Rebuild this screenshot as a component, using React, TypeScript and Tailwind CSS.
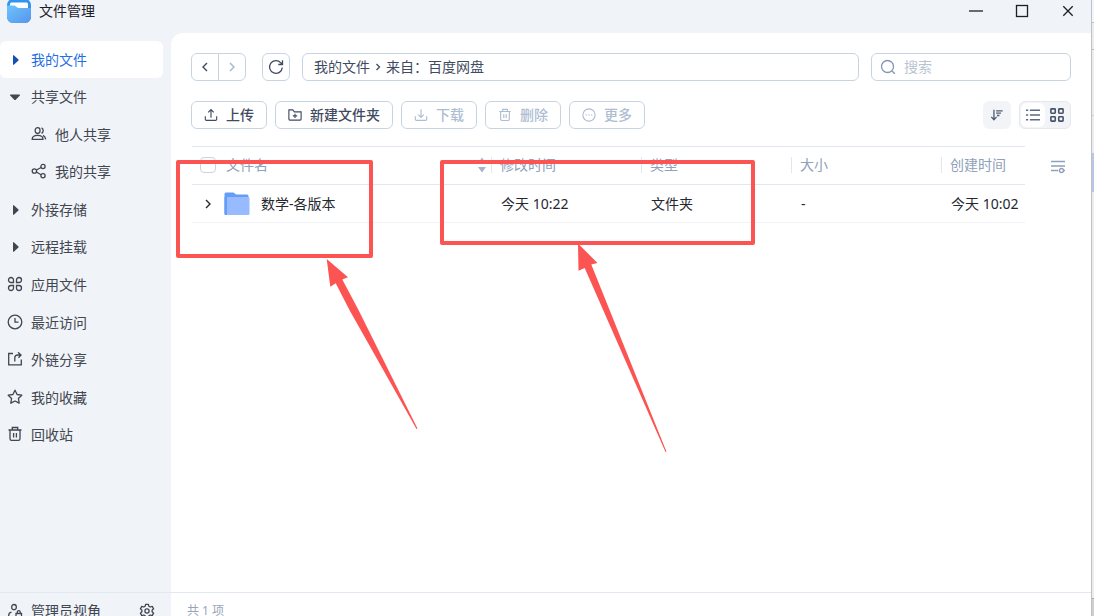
import React from "react";

type IconProps = { size?: string; className?: string };

function Svg({ size = "size-4", className = "", children }: IconProps & { children: React.ReactNode }) {
  return (
    <svg
      viewBox="0 0 16 16"
      fill="none"
      stroke="currentColor"
      strokeWidth="1.3"
      className={`shrink-0 ${size} ${className}`}
      aria-hidden="true"
    >
      {children}
    </svg>
  );
}

const CaretRight = ({ className }: IconProps) => (
  <Svg className={className}>
    <path d="M6 4.200v9.600h.8l4.700-4.300v-1L6.800 4.200z" fill="currentColor" stroke="none" />
  </Svg>
);
const CaretDown = () => (
  <Svg>
    <path d="M3.200 6.600h9.600v.8L8.500 12h-1L3.200 7.400z" fill="currentColor" stroke="none" />
  </Svg>
);
const People = () => (
  <Svg>
    <rect x="4.200" y="1.700" width="4.800" height="5.800" rx="2.400" />
    <path d="M1.200 13.300c0-2.600 2-3.900 5.400-3.900s5.400 1.300 5.400 3.900z" />
    <path d="M10.500 1.800c1.300.4 1.700 1.500 1.700 2.800s-.5 2.200-1.700 2.700M12 9.400c1.400.7 2.400 2 2.700 3.900" />
  </Svg>
);
const ShareNodes = () => (
  <Svg>
    <circle cx="3.400" cy="8" r="2.200" />
    <circle cx="12" cy="3.500" r="2.100" />
    <circle cx="12" cy="12.700" r="2.100" />
    <path d="M5.400 7l4.700-2.500M5.400 9l4.700 2.700" />
  </Svg>
);
const Apps = () => (
  <Svg>
    <path d="M6.500 6.500H4A2.500 2.500 0 1 1 6.500 4zM9.500 6.500V4A2.500 2.500 0 1 1 12 6.500zM6.500 9.500V12A2.500 2.500 0 1 1 4 9.500zM9.500 9.500H12A2.500 2.500 0 1 1 9.500 12z" />
  </Svg>
);
const Clock = () => (
  <Svg>
    <circle cx="8" cy="8" r="6.800" />
    <path d="M8 4v4.200h3.500" />
  </Svg>
);
const External = () => (
  <Svg>
    <path d="M6 2.500H1.700v11.300h12.600V8.500M7.800 10.500V7c0-2 1.200-3 3-3h3M11 1.200L14 4l-2.500 2.700" />
  </Svg>
);
const Star = () => (
  <Svg>
    <path d="M8 1.200l2.100 4.300 4.700.7-3.400 3.300.8 4.700L8 12l-4.200 2.200.8-4.700L1.200 6.200l4.700-.7z" strokeLinejoin="round" />
  </Svg>
);
const Trash = ({ size }: IconProps) => (
  <Svg size={size}>
    <path d="M1.500 4h13M5.300 4V1.500h5.400V4M3 4v8.700c0 1 .6 1.600 1.600 1.600h6.800c1 0 1.600-.6 1.600-1.600V4M6.600 7v4.500M9.400 7v4.500" />
  </Svg>
);
const AdminUser = () => (
  <Svg>
    <rect x="4.700" y="1.500" width="4.600" height="5.200" rx="2.300" />
    <path d="M7 14H1.700v-1.500c0-1.700 1-3 2.800-3.300M9 10.500h5.500V14H9zM10.300 10.500V9.200c0-2 2.900-2 2.900 0v1.300" />
  </Svg>
);
const Gear = () => (
  <Svg>
    <path
      d="M6.600 1.300h2.800l.5 2 1.300.7 2-.6 1.400 2.400-1.500 1.400v1.600l1.500 1.400-1.400 2.400-2-.6-1.300.7-.5 2H6.600l-.5-2-1.300-.7-2 .6-1.400-2.400 1.500-1.400V7.200L1.400 5.800l1.400-2.400 2 .6 1.300-.7z"
      strokeLinejoin="round"
    />
    <circle cx="8" cy="8" r="2.100" />
  </Svg>
);
const Upload = ({ size }: IconProps) => (
  <Svg size={size}>
    <path d="M8 11V2M4.800 5L8 1.800 11.200 5M1.500 9.500v3.300c0 .9.500 1.400 1.400 1.400h10.200c.9 0 1.400-.5 1.400-1.400V9.500" />
  </Svg>
);
const Download = ({ size }: IconProps) => (
  <Svg size={size}>
    <path d="M8 1.500v9M4.800 7.500L8 10.700l3.200-3.200M1.500 9.500v3.300c0 .9.500 1.400 1.400 1.400h10.200c.9 0 1.400-.5 1.400-1.400V9.500" />
  </Svg>
);
const NewFolder = ({ size }: IconProps) => (
  <Svg size={size}>
    <path d="M1 2.200h4.500l1.800 2.200H15v8.300c0 .7-.4 1.100-1.100 1.100H2.100c-.7 0-1.100-.4-1.100-1.100zM8 6.500v5M5.500 9h5" />
  </Svg>
);
const More = ({ size }: IconProps) => (
  <Svg size={size}>
    <circle cx="8" cy="8" r="7" />
    <path d="M4.200 8h1.500M7.250 8h1.500M10.300 8h1.500" />
  </Svg>
);
const Chevron = ({ className }: IconProps) => (
  <Svg className={className}>
    <path d="M6 4l4 4-4 4" strokeWidth="1.400" />
  </Svg>
);
const CrumbChevron = () => (
  <Svg>
    <path d="M6.500 5l3 3-3 3" strokeWidth="1.300" />
  </Svg>
);
const Refresh = () => (
  <Svg>
    <path d="M14.300 8.500A6.400 6.400 0 1 1 12.800 3.800L14.300 5.300M14.500 1.300v4.200h-4.200" strokeWidth="1.300" />
  </Svg>
);
const Search = () => (
  <Svg className="text-[#8496b5]">
    <circle cx="7.500" cy="7.500" r="6" />
    <path d="M12 12l2.800 2.800" />
  </Svg>
);
const SortDesc = () => (
  <Svg size="size-3.5">
    <path d="M4.500 2v11M1.500 10.200l3 3.200 3-3.200" strokeWidth="1.500" />
    <path d="M7 3.200h7.500M7 5.900h5.500M8 8.600h2.800" strokeWidth="1.500" />
  </Svg>
);
const ListView = () => (
  <Svg size="size-3.5">
    <path d="M0 2.500h2.500M0 8h2.500M0 13.500h2.500M4.500 2.500H16M4.500 8H16M4.500 13.500H16" strokeWidth="1.700" />
  </Svg>
);
const GridView = () => (
  <Svg size="size-3.5">
    <g strokeWidth="1.800">
      <rect x="1" y="1" width="5" height="5" rx=".8" />
      <rect x="10" y="1" width="5" height="5" rx=".8" />
      <rect x="1" y="10" width="5" height="5" rx=".8" />
      <rect x="10" y="10" width="5" height="5" rx=".8" />
    </g>
  </Svg>
);
const Columns = () => (
  <Svg>
    <path d="M1 3.500h14M1 8h14M1 12.500h7" strokeWidth="1.400" />
    <circle cx="11.500" cy="12.500" r="2" />
    <path d="M14 12.500h1M8.700 12.500h.8" />
  </Svg>
);

function AppLogo() {
  return (
    <svg viewBox="0 0 24 24" className="-mt-px size-6 shrink-0" aria-hidden="true">
      <defs>
        <linearGradient id="logo-front" x1="0" y1="0" x2="1" y2="1">
          <stop offset="0" stopColor="#6cc4fb" />
          <stop offset="1" stopColor="#5794ee" />
        </linearGradient>
      </defs>
      <rect width="24" height="24" rx="6" fill="#2f95ee" />
      <rect x="3" y="3.500" width="18" height="8" rx="1.500" fill="#fff" />
      <path d="M0 6.500h7.500c1.500 0 2 2.500 4 2.500H24v9a6 6 0 0 1-6 6H6a6 6 0 0 1-6-6z" fill="url(#logo-front)" />
    </svg>
  );
}

function FolderIcon() {
  return (
    <svg viewBox="0 0 26 24" className="h-6 w-[26px] shrink-0" aria-hidden="true">
      <path d="M.5 2A1.500 1.500 0 0 1 2 .5h7.500l2.500 2h11A1.500 1.500 0 0 1 24.500 4v17H3l-1 2A1.500 1.500 0 0 1 .5 21.500z" fill="#649df8" />
      <rect x="2.500" y="5" width="23" height="18" rx="1.500" fill="#98bbff" />
      <path d="M.5 5v16.500A1.500 1.500 0 0 0 2 23h1V5z" fill="#649df8" />
    </svg>
  );
}

type NavItem = { label: string; icon: React.ReactNode; active?: boolean; nested?: boolean };

const navItems: NavItem[] = [
  { label: "我的文件", icon: <CaretRight className="text-[#1350b4]" />, active: true },
  { label: "共享文件", icon: <CaretDown /> },
  { label: "他人共享", icon: <People />, nested: true },
  { label: "我的共享", icon: <ShareNodes />, nested: true },
  { label: "外接存储", icon: <CaretRight /> },
  { label: "远程挂载", icon: <CaretRight /> },
  { label: "应用文件", icon: <Apps /> },
  { label: "最近访问", icon: <Clock /> },
  { label: "外链分享", icon: <External /> },
  { label: "我的收藏", icon: <Star /> },
  { label: "回收站", icon: <Trash /> },
];

function Sidebar() {
  return (
    <aside className="flex w-[171px] shrink-0 flex-col text-[#41464f]">
      <nav className="mt-2 mr-2 flex h-[413px] flex-col justify-between">
        {navItems.map((item) => (
          <a
            key={item.label}
            href="#"
            className={`flex h-[37px] items-center gap-2 rounded-md [&>svg]:-mt-0.5 ${item.nested ? "pl-[31px]" : "pl-[7px]"} ${
              item.active ? "bg-white text-[#1f6fe5]" : ""
            }`}
          >
            {item.icon}
            <span>{item.label}</span>
          </a>
        ))}
      </nav>
      <div className="mt-auto flex h-6 items-start gap-2 border-t border-[#e1e8f0] pt-2 pl-[7px]">
        <button type="button" className="flex flex-1 items-start gap-2 leading-5">
          <span className="pt-0.5">
            <AdminUser />
          </span>
          管理员视角
        </button>
        <button type="button" aria-label="设置" className="mr-4 pt-0.5">
          <Gear />
        </button>
      </div>
    </aside>
  );
}

function ToolButton({ icon, label, disabled }: { icon: React.ReactNode; label: string; disabled?: boolean }) {
  return (
    <button
      type="button"
      disabled={disabled}
      className="flex h-7 items-center gap-2 rounded-md border border-[#c9d4e2] px-3 font-medium text-[#3f4b60] disabled:text-[#aebdd1]"
    >
      {icon}
      {label}
    </button>
  );
}

function HeadCell({ label }: { label: string }) {
  return (
    <th className="p-0 pb-0.5 text-left font-normal">
      <div className="flex h-4 items-center border-l border-[#e0e7ef] pl-2">{label}</div>
    </th>
  );
}

function FileTable() {
  return (
    <table className="min-w-0 flex-1 table-fixed border-collapse whitespace-nowrap">
      <colgroup>
        <col />
        <col className="w-[150px]" />
        <col className="w-[150px]" />
        <col className="w-[150px]" />
        <col className="w-[84px]" />
      </colgroup>
      <thead>
        <tr className="h-[38px] border-y border-[#e0e7ef] text-[#8fa0ba]">
          <th className="p-0 pb-0.5 text-left font-normal">
            <div className="flex items-center pl-2">
              <input
                type="checkbox"
                aria-label="全选"
                className="mr-[10px] size-4 appearance-none rounded border border-[#c9d4e2]"
              />
              <span className="flex-1">文件名</span>
              <svg viewBox="0 0 10 16" className="mr-1 h-4 w-[10px]" fill="#a5b5cc" aria-hidden="true">
                <path d="M5 .5L9 6H1zM1 10h8l-4 5.500z" />
              </svg>
            </div>
          </th>
          <HeadCell label="修改时间" />
          <HeadCell label="类型" />
          <HeadCell label="大小" />
          <HeadCell label="创建时间" />
        </tr>
      </thead>
      <tbody>
        <tr className="h-[38px] border-b border-[#f1f3f6] text-[#24282f]">
          <td className="p-0">
            <div className="flex items-center pl-2">
              <button type="button" aria-label="展开" className="mr-2">
                <Chevron />
              </button>
              <FolderIcon />
              <span className="ml-[11px]">数学-各版本</span>
            </div>
          </td>
          <td className="p-0 pl-[10px]">今天 10:22</td>
          <td className="p-0 pl-[10px]">文件夹</td>
          <td className="p-0 pl-[10px]">-</td>
          <td className="p-0 pl-[10px]">今天 10:02</td>
        </tr>
      </tbody>
    </table>
  );
}

function Main() {
  return (
    <main className="flex min-w-0 flex-1 flex-col rounded-tl-xl bg-white">
      <div className="flex items-center px-5 pt-5 text-[#3f4b60]">
        <div className="flex h-7 overflow-hidden rounded-md border border-[#c9d4e2]">
          <button type="button" aria-label="后退" className="flex w-[27px] items-center justify-center border-r border-[#c9d4e2]">
            <Chevron className="rotate-180" />
          </button>
          <button type="button" aria-label="前进" className="flex w-[26px] items-center justify-center text-[#a5b5cc]">
            <Chevron />
          </button>
        </div>
        <button
          type="button"
          aria-label="刷新"
          className="ml-4 flex size-7 items-center justify-center rounded-md border border-[#c9d4e2]"
        >
          <Refresh />
        </button>
        <div className="ml-3 flex h-7 min-w-0 flex-1 items-center rounded-md border border-[#c9d4e2] px-[11px]">
          <a href="#">我的文件</a>
          <CrumbChevron />
          <a href="#">来自：百度网盘</a>
        </div>
        <label className="ml-3 flex h-7 w-[200px] items-center gap-2 rounded-md border border-[#c9d4e2] px-2">
          <Search />
          <input
            type="text"
            aria-label="搜索"
            placeholder="搜索"
            className="min-w-0 flex-1 bg-transparent outline-none placeholder:text-[#b9c4d2]"
          />
        </label>
      </div>

      <div className="mt-5 flex items-center gap-2 px-5">
        <ToolButton icon={<Upload size="size-3.5" />} label="上传" />
        <ToolButton icon={<NewFolder size="size-3.5" />} label="新建文件夹" />
        <ToolButton icon={<Download size="size-3.5" />} label="下载" disabled />
        <ToolButton icon={<Trash size="size-3.5" />} label="删除" disabled />
        <ToolButton icon={<More size="size-3.5" />} label="更多" disabled />
        <button
          type="button"
          aria-label="排序"
          className="ml-auto flex size-7 items-center justify-center rounded-md bg-[#f2f4f7] text-[#4f5d74]"
        >
          <SortDesc />
        </button>
        <div className="flex h-7 items-center rounded-md border border-[#e5e8ee] bg-[#f2f4f7] px-px text-[#5b6a82]">
          <button type="button" aria-label="列表" className="flex h-6 w-6 items-center justify-center rounded-md bg-white">
            <ListView />
          </button>
          <button type="button" aria-label="网格" className="flex h-6 w-6 items-center justify-center text-[#45536a]">
            <GridView />
          </button>
        </div>
      </div>

      <div className="mt-[17px] flex items-start pr-5 pl-[21px]">
        <FileTable />
        <button type="button" aria-label="列设置" className="flex h-[39px] w-[46px] items-center justify-end pr-[5px] text-[#8fa0ba]">
          <Columns />
        </button>
      </div>

      <footer className="mt-auto h-6 border-t border-[#e1e8f0] px-4 pt-2 text-xs leading-5 text-[#98a5b9]">共 1 项</footer>
    </main>
  );
}

function Annotations() {
  return (
    <div className="pointer-events-none absolute inset-0 z-10" aria-hidden="true">
      <div className="absolute top-[160px] left-[176px] h-[98px] w-[197px] rounded-xs border-4 border-[#fc5453]" />
      <div className="absolute top-[160px] left-[440px] h-[85px] w-[315px] rounded-xs border-4 border-[#fc5453]" />
      <svg className="absolute top-0 left-0 h-[616px] w-[1094px]" viewBox="0 0 1094 616" fill="#fc5453">
        <path d="M326.700 259L348 277.200L342.300 279.600L358 309L417.500 428.500L416.500 429L350 311L335.700 283.300L330.300 286.700z" />
        <path d="M578 243.500L597.500 263L591.300 264.500L666.500 451.700L665.500 452L584.700 268L578.500 270.800z" />
      </svg>
    </div>
  );
}

export default function App() {
  return (
    <div className="relative flex h-screen overflow-hidden bg-[#f0f3f8] font-['Noto_Sans','Noto_Sans_CJK_SC',sans-serif] text-sm leading-5">
      <div className="flex min-w-0 flex-1 flex-col">
        <header className="flex h-[33px] shrink-0 items-start pl-[7px] text-[#1c2026]">
          <AppLogo />
          <h1 className="ml-2 leading-[22px]">文件管理</h1>
          <div className="ml-auto flex">
            <button type="button" aria-label="最小化" className="flex h-[22px] w-[46px] items-center justify-center">
              <Svg>
                <path d="M1 8h14" />
              </Svg>
            </button>
            <button type="button" aria-label="最大化" className="flex h-[22px] w-[46px] items-center justify-center">
              <Svg>
                <rect x="2.500" y="2.500" width="11" height="11" />
              </Svg>
            </button>
            <button type="button" aria-label="关闭" className="flex h-[22px] w-[46px] items-center justify-center">
              <Svg>
                <path d="M3.300 3.300l9.400 9.400M12.700 3.300l-9.400 9.400" />
              </Svg>
            </button>
          </div>
        </header>
        <div className="flex min-h-0 flex-1">
          <Sidebar />
          <Main />
        </div>
      </div>
      <div className="flex w-[3px] shrink-0 flex-col border-l border-[#bfc1c4] bg-[#ececec]">
        <div className="h-[23px] border-b border-[#b5c3d3] bg-[#f3f5f8]" />
        <div className="h-[27px] border-b border-[#bdbdbd]" />
        <div className="h-[66px] border-b border-[#cfcfcf]" />
        <div className="mt-[37px] h-[39px] bg-[#b9c9e4]" />
        <div className="mt-auto h-[18px] border-t border-[#a9a9a9] bg-[#cfcfcf]" />
      </div>
      <Annotations />
    </div>
  );
}
